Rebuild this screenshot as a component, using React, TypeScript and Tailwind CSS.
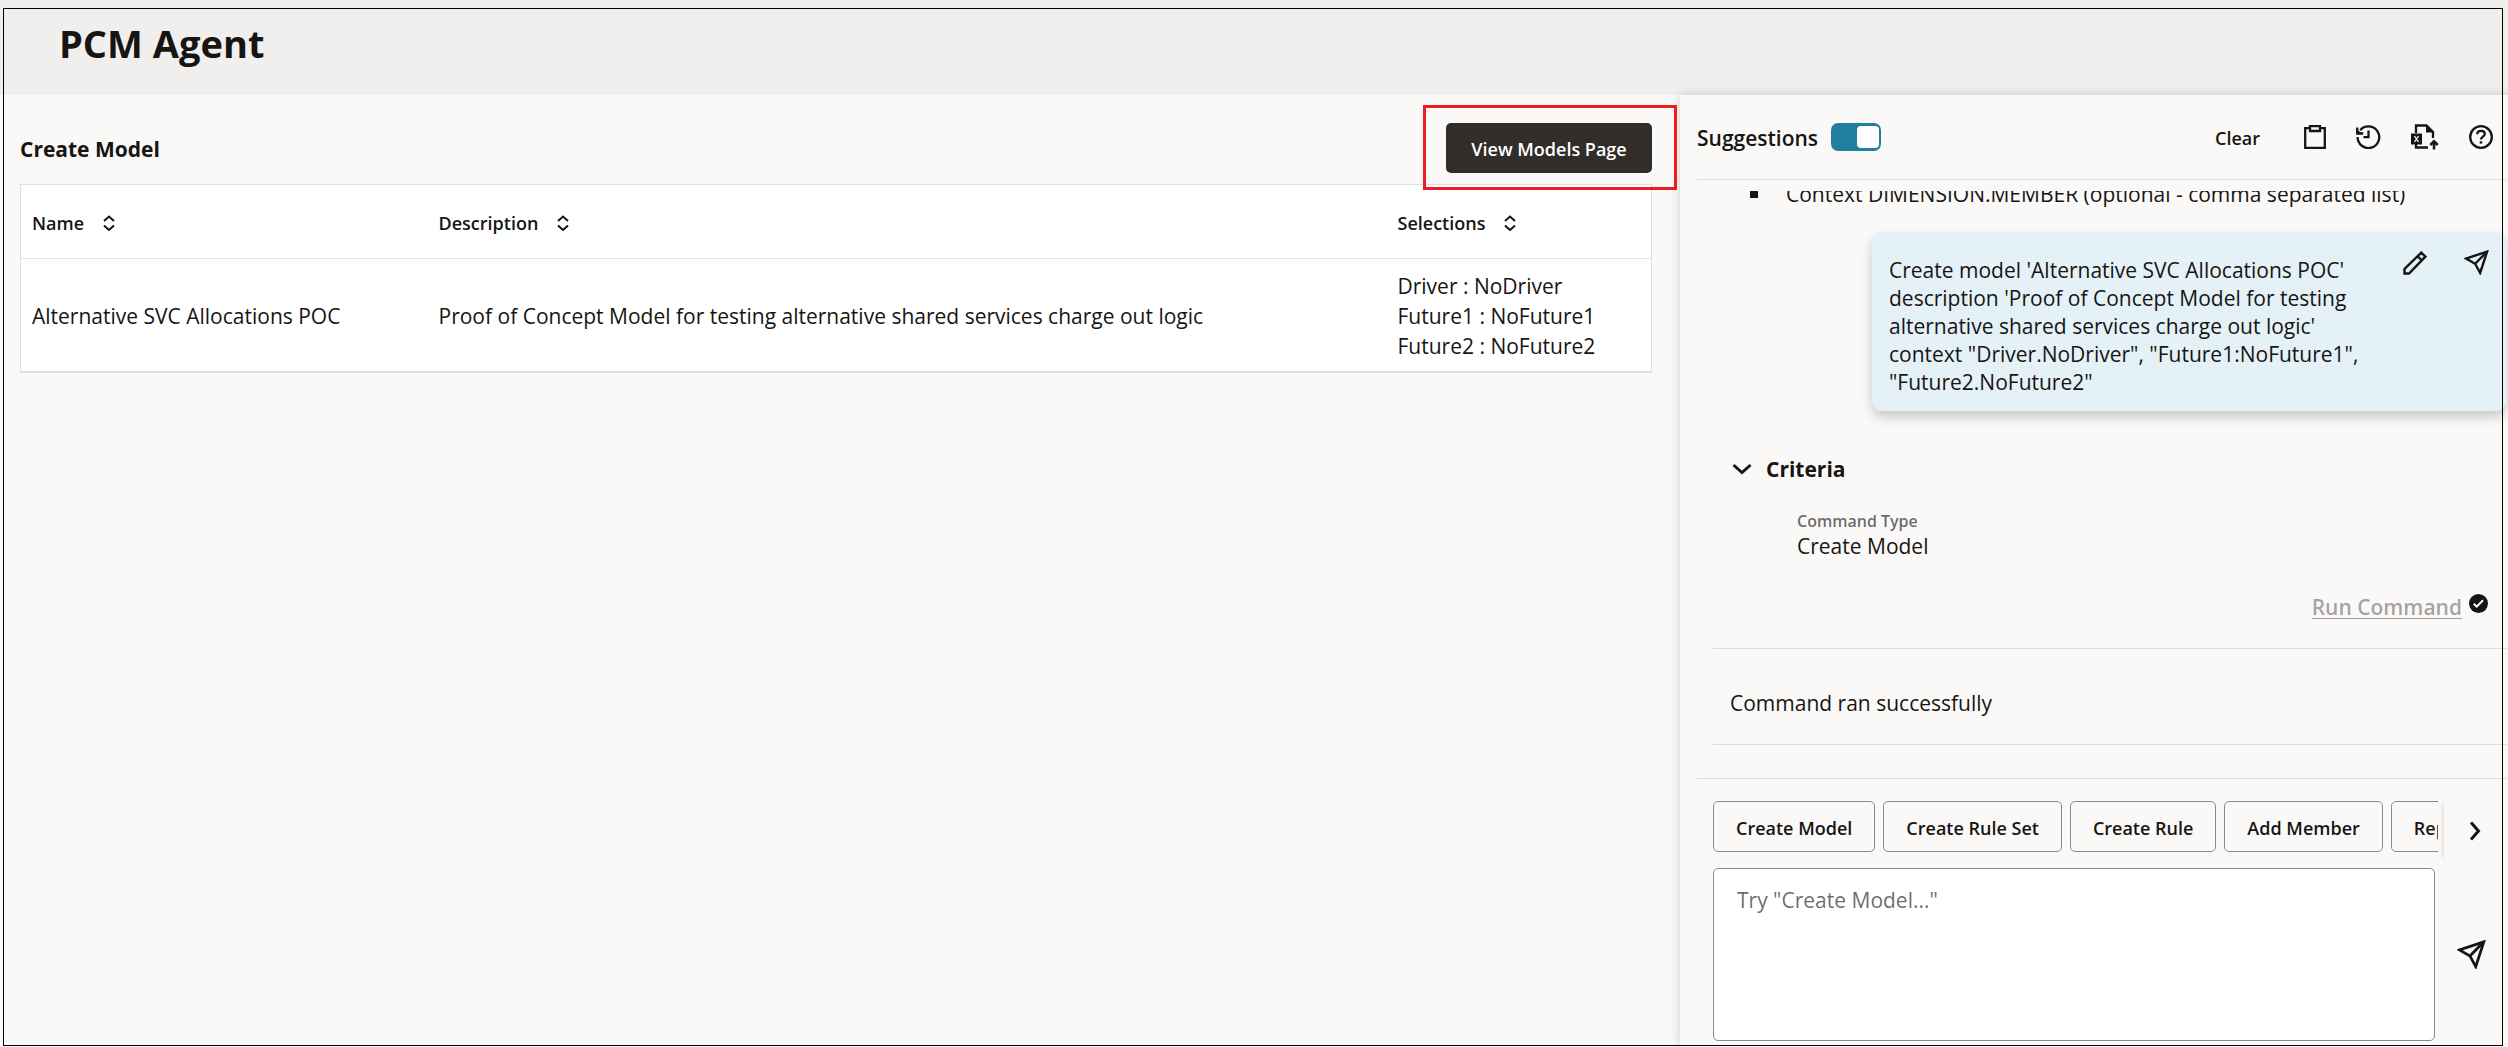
import React, { useState } from 'react';

const columns = [
  { label: 'Name', width: 'w-[407px]' },
  { label: 'Description', width: '' },
  { label: 'Selections', width: 'w-[265px]' },
];

const models = [
  {
    name: 'Alternative SVC Allocations POC',
    description: 'Proof of Concept Model for testing alternative shared services charge out logic',
    selections: ['Driver : NoDriver', 'Future1 : NoFuture1', 'Future2 : NoFuture2'],
  },
];

const commands = ['Create Model', 'Create Rule Set', 'Create Rule', 'Add Member', 'Report'];

const SortIcon = () => (
  <svg width="12" height="16" viewBox="0 0 12 16" fill="none" stroke="currentColor" strokeWidth="2">
    <path d="M1 6 6 1.500 11 6M1 10.500 6 15l5-4.500" />
  </svg>
);

const ClipboardIcon = () => (
  <svg width="22" height="24" viewBox="0 0 22 24" fill="none" stroke="currentColor" strokeWidth="2.300">
    <path d="M6 3.200H1.200v19.600h19.600V3.200H16" />
    <path d="M6 1.200h10V6H6z" />
  </svg>
);

const HistoryIcon = () => (
  <svg width="25" height="24" viewBox="0 0 25 24" fill="none" stroke="currentColor" strokeWidth="2.300">
    <path d="M1.600 12A10.800 10.800 0 1 0 4.200 5.200" />
    <path d="M1.200 2.500v6h6" />
    <path d="M1 4 6 9H1z" fill="currentColor" stroke="none" />
    <path d="M12.500 5.500v6.700H7.500" />
  </svg>
);

const ExcelExportIcon = () => (
  <svg width="28" height="26" viewBox="0 0 28 26" fill="none" stroke="currentColor" strokeWidth="2.300">
    <path d="M5 9V1.500h10.500L22 8v6M5 20v3.500h12" />
    <path d="M15 1v7.500h7.500z" fill="currentColor" stroke="none" />
    <path d="M0 9.500h11v11H0z" fill="currentColor" stroke="none" />
    <path d="m3.500 12 4 6M7.500 12l-4 6" stroke="#fff" strokeWidth="1.300" />
    <path d="M23 25.500V18M19.300 21 23 17.300 26.700 21" strokeWidth="2.500" />
  </svg>
);

const HelpIcon = () => (
  <svg width="24" height="24" viewBox="0 0 24 24" fill="none" stroke="currentColor" strokeWidth="2.300">
    <circle cx="12" cy="12" r="10.800" />
    <path d="M8.200 9.300c0-2.100 1.600-3.500 3.800-3.500s3.800 1.300 3.800 3.200c0 2.600-3.800 2.700-3.800 5.500" />
    <path d="M12 16.300v2.300" strokeWidth="2.500" />
  </svg>
);

const PencilIcon = () => (
  <svg width="24" height="24" viewBox="0 0 24 24" fill="none" stroke="currentColor" strokeWidth="2.400">
    <path d="M1.500 22.500v-4.600L18.300 1.600l4.100 4.100L6 22.500z" />
    <path d="m14.500 5.200 4.300 4.300" />
  </svg>
);

const SendIcon = ({ size }: { size: number }) => (
  <svg width={size} height={size} viewBox="0 0 24 24" fill="none" stroke="currentColor" strokeWidth="2.300">
    <path d="M22.200 1.500 2 8.200l8.700 5L15.500 22z" />
    <path d="M22.200 1.500 10.700 13.200" />
  </svg>
);

const ChevronIcon = ({ className }: { className?: string }) => (
  <svg width="20" height="20" viewBox="0 0 20 20" fill="none" stroke="currentColor" strokeWidth="3" className={className}>
    <path d="m1.500 6 8.500 7.500L18.500 6" />
  </svg>
);

const CheckIcon = () => (
  <svg width="19" height="19" viewBox="0 0 19 19" fill="none">
    <circle cx="9.500" cy="9.500" r="9.500" fill="currentColor" />
    <path d="m4.800 9.800 2.900 2.800 6.300-6.300" stroke="#fff" strokeWidth="2" />
  </svg>
);

const ModelTable = () => (
  <table className="mt-[11px] w-full table-fixed border border-b-2 border-[#e0dfde] bg-white text-left">
    <thead>
      <tr className="h-[74px] border-b border-[#e4e3e2]">
        {columns.map((col) => (
          <th key={col.label} scope="col" className={`${col.width} px-[11px] pt-0.5 pb-0 text-lg font-semibold`}>
            <button type="button" className="flex items-center gap-[19px]">
              {col.label}
              <SortIcon />
            </button>
          </th>
        ))}
      </tr>
    </thead>
    <tbody>
      {models.map((model) => (
        <tr key={model.name} className="text-[21px] leading-[30px]">
          <td className="px-[11px] pt-3 pb-2.5">{model.name}</td>
          <td className="px-[11px] pt-3 pb-2.5">{model.description}</td>
          <td className="px-[11px] pt-3 pb-2.5">
            {model.selections.map((line) => (
              <div key={line}>{line}</div>
            ))}
          </td>
        </tr>
      ))}
    </tbody>
  </table>
);

const AssistantHeader = () => {
  const [suggestions, setSuggestions] = useState(true);

  return (
    <div className="mr-px ml-[17px] flex h-[85px] items-center justify-between border-b border-[#dddcdb] pr-3.5">
      <div className="flex items-center gap-[13px]">
        <label htmlFor="suggestions" className="pt-0.5 text-[21px] leading-7 font-semibold">Suggestions</label>
        <input
          id="suggestions"
          type="checkbox"
          role="switch"
          checked={suggestions}
          onChange={(e) => setSuggestions(e.target.checked)}
          className="flex h-7 w-[50px] appearance-none items-center rounded-[7px] bg-[#8b8580] px-0.5 before:size-[22px] before:rounded before:bg-white checked:justify-end checked:bg-[#227e9e]"
        />
      </div>
      <div className="flex items-center">
        <button type="button" className="mr-11 pt-0.5 text-lg font-semibold">Clear</button>
        <div className="flex items-center gap-[30px]">
          <button type="button" aria-label="Copy"><ClipboardIcon /></button>
          <button type="button" aria-label="History"><HistoryIcon /></button>
          <button type="button" aria-label="Export to Excel"><ExcelExportIcon /></button>
          <button type="button" aria-label="Help"><HelpIcon /></button>
        </div>
      </div>
    </div>
  );
};

const Conversation = () => (
  <div className="mt-[11px] flex-1 overflow-hidden text-[21px] leading-7">
    <ul className="-mt-[11px] pl-[70px]">
      <li className="flex items-center gap-7">
        <span className="size-2 bg-[#161513]" />
        Context DIMENSION.MEMBER (optional - comma separated list)
      </li>
    </ul>

    <div className="mt-6 mr-0.5 ml-48 flex items-start justify-between rounded-[10px] bg-[#e4f1f7] pt-6 pr-[17px] pb-[15px] pl-[17px] shadow-[0_6px_12px_rgba(0,0,0,0.2)]">
      <p>
        Create model 'Alternative SVC Allocations POC'<br />
        description 'Proof of Concept Model for testing<br />
        alternative shared services charge out logic'<br />
        context "Driver.NoDriver", "Future1:NoFuture1",<br />
        "Future2.NoFuture2"
      </p>
      <div className="-mt-1.5 flex gap-[37px]">
        <button type="button" aria-label="Edit"><PencilIcon /></button>
        <button type="button" aria-label="Send again"><SendIcon size={25} /></button>
      </div>
    </div>

    <button type="button" aria-expanded="true" className="mt-11 ml-[52px] flex items-center gap-[14px] font-bold">
      <ChevronIcon />
      Criteria
    </button>

    <dl className="mt-[27px] ml-[117px]">
      <dt className="text-base leading-[22px] font-semibold text-[#161513]/65">Command Type</dt>
      <dd>Create Model</dd>
    </dl>

    <div className="mt-[33px] flex justify-end gap-[7px] pr-5">
      <a href="#run" aria-disabled="true" className="font-semibold text-[#161513]/40 underline decoration-1 underline-offset-[3px]">Run Command</a>
      <span className="pt-px"><CheckIcon /></span>
    </div>

    <div className="mt-[27px] mr-px ml-[33px] border-y border-[#dddcdb] pt-10 pb-[27px] pl-[17px]">
      Command ran successfully
    </div>
  </div>
);

const Composer = () => (
  <form className="mt-8 mr-px ml-[17px] border-t border-[#dddcdb] pt-[22px] pb-1.5 pl-4">
    <div className="flex items-start">
      <div className="flex min-w-0 flex-1 gap-2 overflow-hidden">
        {commands.map((command) => (
          <button
            key={command}
            type="button"
            className="h-[51px] shrink-0 rounded-[5px] border border-[#8b8a89] px-[22px] pt-0.5 text-lg font-semibold whitespace-nowrap"
          >
            {command}
          </button>
        ))}
      </div>
      <button
        type="button"
        aria-label="More commands"
        className="mr-4 ml-1.5 flex h-[59px] w-[47px] items-center justify-center pl-3.5 shadow-[-3px_0_4px_-2px_rgba(0,0,0,0.14)]"
      >
        <ChevronIcon className="-rotate-90" />
      </button>
    </div>
    <div className="mt-2 flex">
      <textarea
        aria-label="Command"
        placeholder={'Try "Create Model..."'}
        className="h-[173px] min-w-0 flex-1 resize-none rounded-[5px] border border-[#8b8a89] bg-white px-[23px] pt-[17px] text-[21px] leading-7 placeholder:text-[#161513]/65"
      />
      <button type="button" aria-label="Send" className="flex w-[72px] items-center justify-center">
        <SendIcon size={29} />
      </button>
    </div>
  </form>
);

export default function App() {
  return (
    <div className="relative flex min-h-screen flex-col overflow-hidden bg-[#fbf9f8] font-['Open_Sans','Noto_Sans',sans-serif] text-[#161513]">
      <header className="h-[95px] bg-[#f0efed] pt-[19px] pl-[59px]">
        <h1 className="text-[38px] leading-[48px] font-bold">PCM Agent</h1>
      </header>

      <div className="flex flex-1">
        <main className="min-w-0 flex-1 pt-7 pr-7 pl-5">
          <div className="flex items-center justify-between">
            <h2 className="pt-0.5 text-[21px] leading-7 font-bold">Create Model</h2>
            <div className="relative">
              <button type="button" className="h-[50px] min-w-[206px] rounded-[5px] bg-[#312d2a] px-6 pt-0.5 text-lg font-semibold text-white">
                View Models Page
              </button>
              <div className="pointer-events-none absolute -top-[18px] -right-[25px] -bottom-[17px] -left-[23px] z-10 border-3 border-[#ed1c24]" />
            </div>
          </div>
          <ModelTable />
        </main>

        <aside className="flex w-[828px] shrink-0 flex-col bg-[#fbf9f8] shadow-[0_0_10px_rgba(0,0,0,0.18)]">
          <AssistantHeader />
          <Conversation />
          <Composer />
        </aside>
      </div>

      <div className="pointer-events-none absolute top-2 right-[5px] bottom-px left-[3px] z-20 border border-black" />
    </div>
  );
}
